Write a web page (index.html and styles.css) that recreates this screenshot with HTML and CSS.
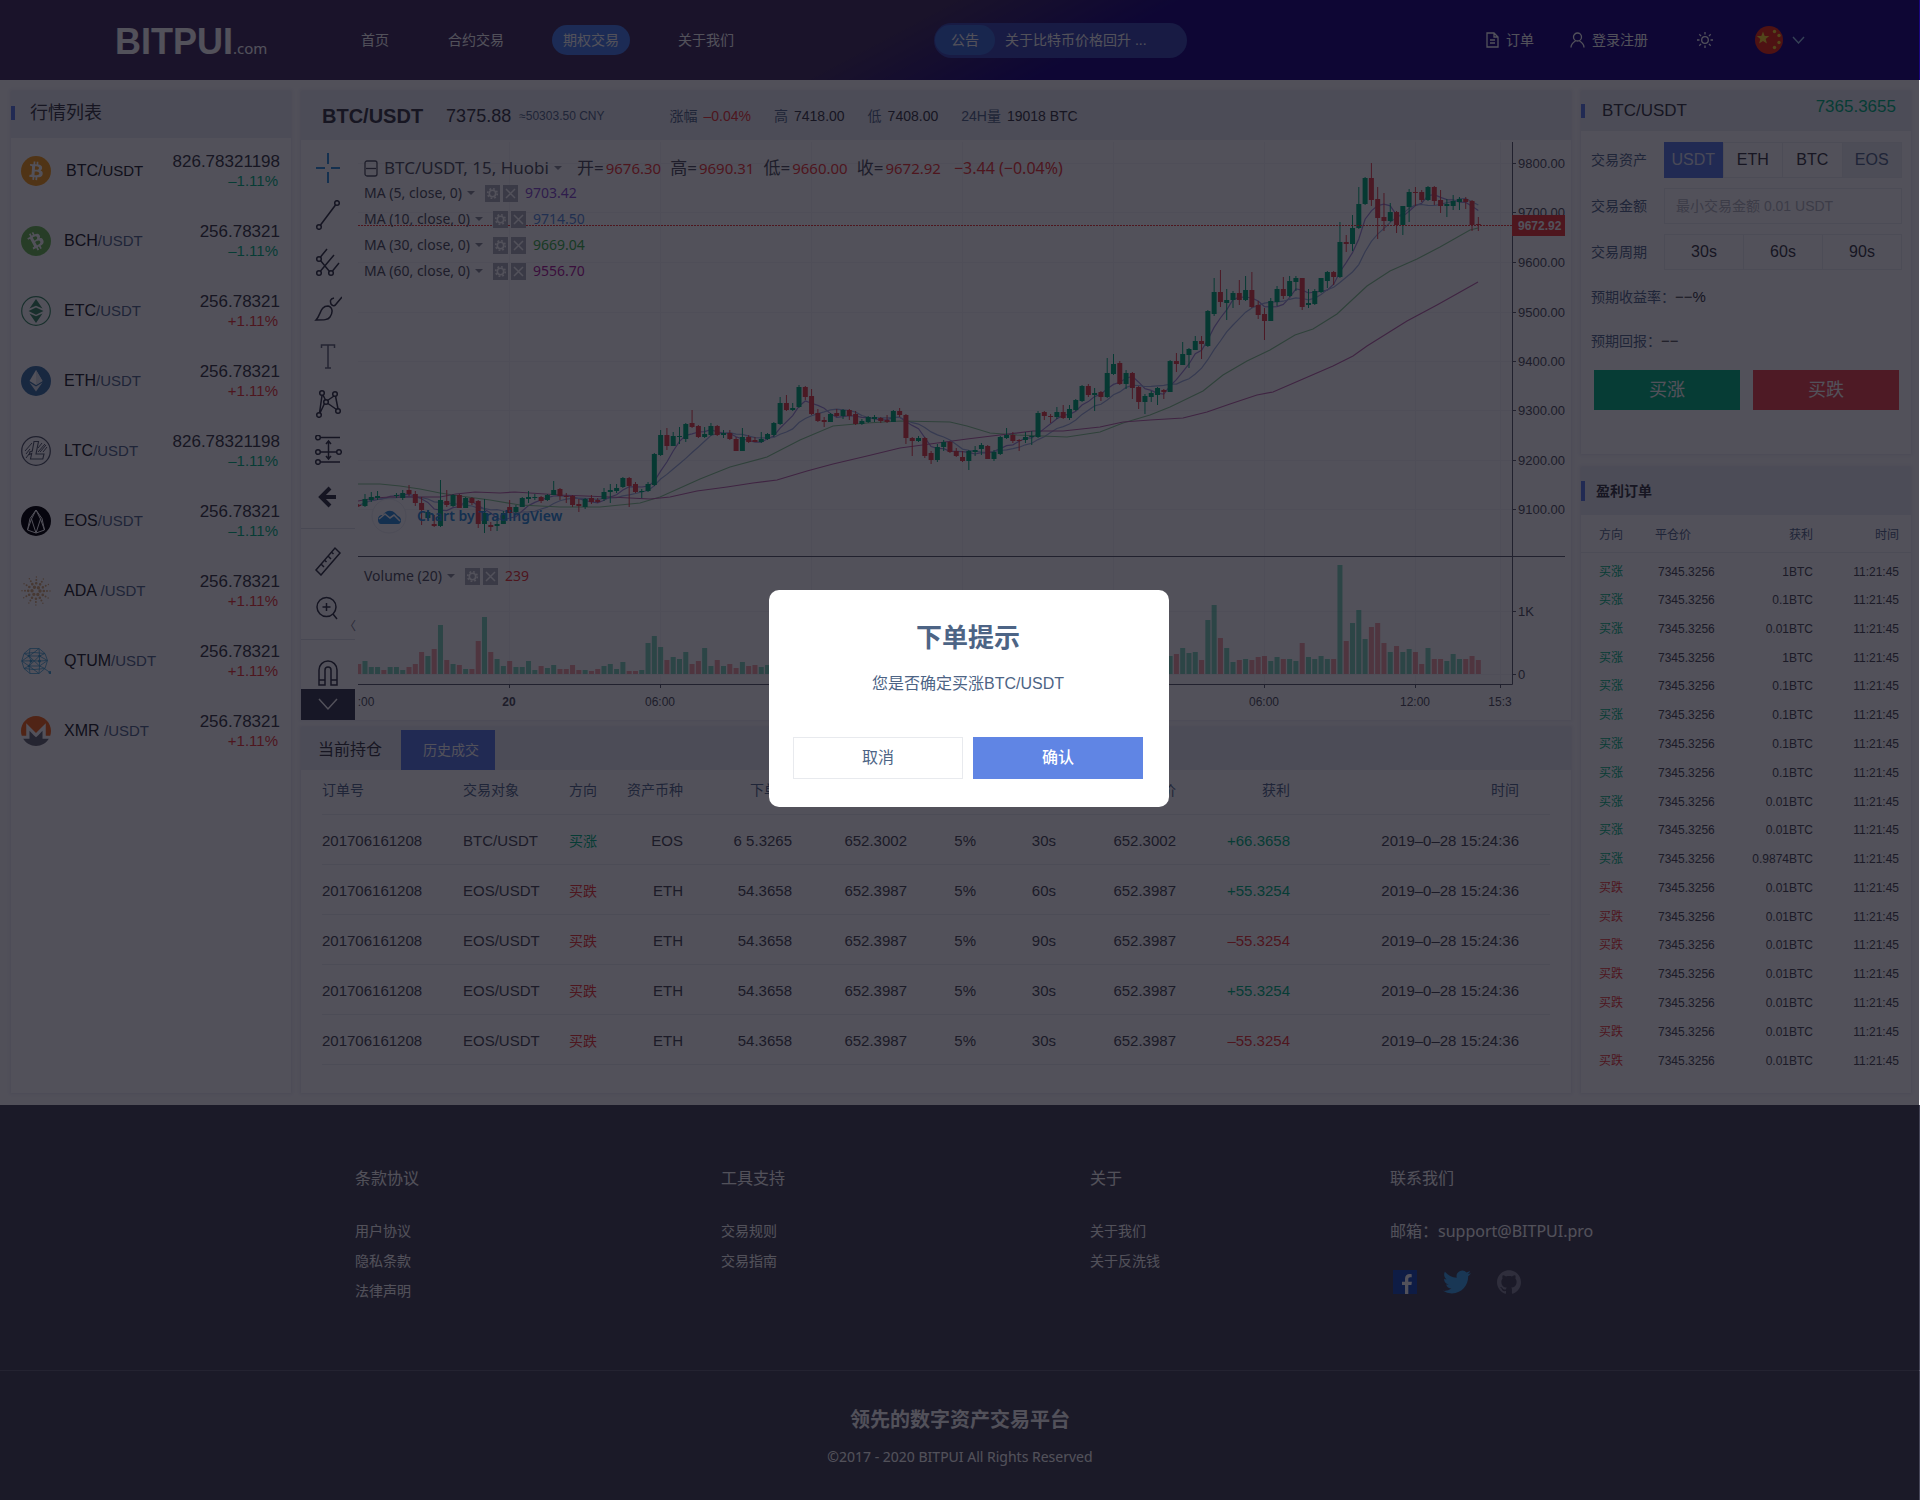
FILE: index.html
```html
<!DOCTYPE html>
<html lang="zh-CN">
<head>
<meta charset="utf-8">
<title>BITPUI 期权交易</title>
<meta name="viewport" content="width=device-width, initial-scale=1">
<link rel="stylesheet" href="styles.css">
</head>
<body>
<svg class="defs" aria-hidden="true">
  <symbol id="gear" viewBox="0 0 15 17"><rect width="15" height="17" fill="#b0b3bd"/><circle cx="7.5" cy="8.5" r="3.2" fill="none" stroke="#fff" stroke-width="1.6"/><circle cx="7.5" cy="8.5" r="4.8" fill="none" stroke="#fff" stroke-width="1.6" stroke-dasharray="1.8 1.97"/></symbol>
  <symbol id="cross" viewBox="0 0 15 17"><rect width="15" height="17" fill="#b0b3bd"/><path d="M3 4l9 9M12 4l-9 9" stroke="#fff" stroke-width="1.5"/></symbol>
  <symbol id="coin-b" viewBox="0 0 24 24"><path fill="#fff" fill-rule="evenodd" d="M17.288 10.291c.24-1.59-.974-2.45-2.64-3.03l.54-2.153-1.315-.33-.525 2.107c-.345-.087-.705-.167-1.064-.25l.526-2.127-1.32-.33-.54 2.165c-.285-.067-.565-.132-.84-.2l-1.815-.45-.35 1.407s.975.225.955.236c.535.136.63.486.615.766l-1.477 5.92c-.075.166-.24.406-.614.314.015.02-.96-.24-.96-.24l-.66 1.51 1.71.426.93.242-.54 2.19 1.32.327.54-2.17c.36.1.705.19 1.05.273l-.51 2.154 1.32.33.545-2.19c2.24.427 3.93.257 4.64-1.774.57-1.637-.03-2.58-1.217-3.196.854-.193 1.5-.76 1.68-1.93zm-3.01 4.22c-.404 1.64-3.157.75-4.05.53l.72-2.9c.896.23 3.757.67 3.33 2.37zm.41-4.24c-.37 1.49-2.662.735-3.405.55l.654-2.64c.744.18 3.137.524 2.75 2.09z"/></symbol>
</svg>

<header class="topbar">
  <a class="logo" href="#">BITPUI<span>.com</span></a>
  <nav class="nav">
    <a href="#">首页</a><a href="#">合约交易</a><a class="on" href="#">期权交易</a><a href="#">关于我们</a>
  </nav>
  <a class="notice" href="#"><b>公告</b><span>关于比特币价格回升 ...</span></a>
  <div class="session">
    <a href="#"><svg width="13" height="16" viewBox="0 0 13 16" fill="none" stroke="currentColor" stroke-width="1.3"><path d="M1 1h7l4 4v10H1zM8 1v4h4M4 8h5M4 11h5"/></svg>订单</a>
    <a href="#"><svg width="15" height="16" viewBox="0 0 15 16" fill="none" stroke="currentColor" stroke-width="1.3"><circle cx="7.5" cy="5" r="4"/><path d="M1 15.500c0-3.500 2-5 4.500-6.500M14 15.500c0-3.500-2-5-4.500-6.500"/></svg>登录注册</a>
  </div>
  <div class="prefs">
    <button aria-label="主题"><svg width="16" height="16" viewBox="0 0 16 16" fill="none" stroke="#fff" stroke-width="1.300"><circle cx="8" cy="8" r="3.300"/><path d="M8 0v2.500M8 13.500V16M0 8h2.500M13.500 8H16M2.300 2.300l1.800 1.800M11.900 11.900l1.800 1.800M2.300 13.700l1.800-1.800M11.900 4.100l1.800-1.800"/></svg></button>
    <button class="lang" aria-label="语言"><svg width="28" height="28" viewBox="0 0 28 28"><circle cx="14" cy="14" r="14" fill="#f02d12"/><g fill="#ffda2c"><path d="M8 5.500l1.700 4.400 4.500.200-3.500 2.900 1.200 4.500L8 15l-3.900 2.500 1.200-4.500L1.800 10.100l4.500-.200z"/><circle cx="19.500" cy="5.500" r="1.700"/><circle cx="24" cy="9.500" r="1.700"/><circle cx="24" cy="16.500" r="1.700"/><circle cx="19.500" cy="21.500" r="1.700"/></g></svg><svg width="13" height="8" viewBox="0 0 13 8" fill="none" stroke="#9fc8f0" stroke-width="1.400"><path d="M1 1l5.500 6L12 1"/></svg></button>
  </div>
</header>

<main class="board">
  <section class="panel markets">
    <h2 class="head mark">行情列表</h2>
    <ul>
      <li><svg viewBox="0 0 30 30"><circle cx="15" cy="15" r="15" fill="#f99f1b"/><use href="#coin-b" x="0" y="0" width="30" height="30" transform="rotate(-10 15 15)"/></svg><span class="pair main">BTC/<i>USDT</i></span><span class="quote">826.78321198<em class="up">–1.11%</em></span></li>
      <li><svg viewBox="0 0 30 30"><circle cx="15" cy="15" r="15" fill="#6ebd55"/><use href="#coin-b" x="0" y="0" width="30" height="30" transform="rotate(-42 15 15)"/></svg><span class="pair">BCH<i>/USDT</i></span><span class="quote">256.78321<em class="up">–1.11%</em></span></li>
      <li><svg viewBox="0 0 30 30"><circle cx="15" cy="15" r="14.300" fill="none" stroke="#3f8e66" stroke-width="1.200"/><g fill="#3f8e66"><path d="M15 3l6.500 9.500L15 9.700l-6.500 2.800zM15 11.500l7.500 3.500-7.500 3.700L7.500 15zM15 27l-6.500-9.500 6.500 2.800 6.500-2.800z"/></g></svg><span class="pair">ETC<i>/USDT</i></span><span class="quote">256.78321<em class="down">+1.11%</em></span></li>
      <li><svg viewBox="0 0 30 30"><circle cx="15" cy="15" r="15" fill="#3f76a8"/><path fill="#fff" d="M15 4l6.500 11L15 19l-6.500-4z"/><path fill="#dfe6ef" d="M15 4v15l6.500-4zM8.500 16.500L15 25.500l6.500-9L15 20.500z"/></svg><span class="pair">ETH<i>/USDT</i></span><span class="quote">256.78321<em class="down">+1.11%</em></span></li>
      <li><svg viewBox="0 0 30 30" fill="none" stroke="#555c6b"><circle cx="15" cy="15" r="14.300" stroke-width="1.300"/><path stroke-width="1.100" d="M13 5.500h4.500L15 18h8l-1.200 5H9.500l1.200-5.500-2.500 1 .6-2.500 2.500-1z"/><path d="M4 15l7-8M5 18l4-5M5 22l3-4M17 16l7-8M19 16l6-7M17 12l4-5M22 16l4-5" stroke-width="1"/></svg><span class="pair">LTC<i>/USDT</i></span><span class="quote">826.78321198<em class="up">–1.11%</em></span></li>
      <li><svg viewBox="0 0 30 30"><circle cx="15" cy="15" r="15" fill="#000"/><path fill="none" stroke="#fff" stroke-width="1" stroke-linejoin="round" d="M15 4l-6 8.500L6.500 24 15 27l8.500-3L21 12.500zM15 4l-4.500 9L15 27l4.500-14zM6.500 24l4-11M23.500 24l-4-11"/></svg><span class="pair">EOS<i>/USDT</i></span><span class="quote">256.78321<em class="up">–1.11%</em></span></li>
      <li><svg viewBox="0 0 30 30" fill="none" stroke="#d9ad7c" stroke-linecap="round"><circle cx="15" cy="15" r="4" stroke-width="3.400" stroke-dasharray="0 4.188"/><circle cx="15" cy="15" r="7.800" stroke-width="2.600" stroke-dasharray="0 4.084"/><circle cx="15" cy="15" r="11" stroke-width="2" stroke-dasharray="0 5.759"/><circle cx="15" cy="15" r="14" stroke-width="1.500" stroke-dasharray="0 7.330"/></svg><span class="pair">ADA <i>/USDT</i></span><span class="quote">256.78321<em class="down">+1.11%</em></span></li>
      <li><svg viewBox="0 0 30 30" fill="none" stroke="#45a5d4" stroke-width=".8"><path d="M9 2.500h9l6 5 2.500 7-2.500 8-6 5H9l-6-5L.8 15 3 7.500zM3 7.500l10-1 11 1M.8 15L8 10l10.500 0 8 4.500M.8 15l9-.200 8.700.200 8-.5M.8 15L8 20l10.500 0 8-5.500M3 22.500l10 1 11-1M9 2.500L8 10l5-3.500L18 2.500l.5 7.500 5.500-2.500M8 10l2 5-2 5 1 7.500M18.500 10v10l-.5 7.500M3 7.500L8 10M3 22.500L8 20l10 7.500M8 10l10.500 10 5.500 2.500M18.500 10L8 20M24 23l5 3.500"/><g fill="#45a5d4" stroke="none"><circle cx="10" cy="15" r="1.500"/><circle cx="18.500" cy="15" r="1.500"/><circle cx="18.500" cy="10" r="1.300"/><circle cx="8" cy="20" r="1.300"/><circle cx="8" cy="10" r="1.300"/><circle cx="29" cy="26.500" r="1.500"/></g></svg><span class="pair">QTUM<i>/USDT</i></span><span class="quote">256.78321<em class="down">+1.11%</em></span></li>
      <li><svg viewBox="0 0 24 24"><path fill="#f8691c" d="M12 0C5.365 0 0 5.373 0 12.015c0 1.335.228 2.607.618 3.810h3.577V5.729L12 13.545l7.805-7.815v10.095h3.577c.389-1.203.618-2.475.618-3.810C24 5.375 18.635 0 12 0z"/><path fill="#6a6b76" d="M10.212 15.307l-3.417-3.421v6.351H1.758C3.870 21.689 7.678 24 12 24s8.162-2.311 10.245-5.764h-5.040v-6.351l-3.386 3.421-1.788 1.790z"/></svg><span class="pair">XMR <i>/USDT</i></span><span class="quote">256.78321<em class="down">+1.11%</em></span></li>
    </ul>
  </section>

  <div class="column">
    <section class="panel">
      <div class="head ticker">
        <h1>BTC/USDT</h1><strong>7375.88</strong><small>≈50303.50 CNY</small>
        <dl>
          <div><dt>涨幅</dt><dd class="down">–0.04%</dd></div>
          <div><dt>高</dt><dd>7418.00</dd></div>
          <div><dt>低</dt><dd>7408.00</dd></div>
          <div><dt>24H量</dt><dd>19018 BTC</dd></div>
        </dl>
      </div>
      <div class="workspace">
        <div class="tools">
          <button aria-label="十字光标"><svg class="blue" viewBox="0 0 28 30"><path d="M14 0v11M14 19v11M2 15h9M17 15h9"/></svg></button>
          <button aria-label="趋势线"><svg viewBox="0 0 28 30"><circle cx="5" cy="27" r="2.300"/><circle cx="23" cy="3" r="2.300"/><path d="M6.500 25L21.500 5"/></svg></button>
          <button aria-label="音叉线"><svg viewBox="0 0 28 30"><circle cx="5" cy="12" r="2.300"/><circle cx="5" cy="26" r="2.300"/><circle cx="17" cy="26" r="2.300"/><path d="M6.500 10L13 2M6.500 24L20 8M18.500 24L25 16M6.500 13.500l9 11"/></svg></button>
          <button aria-label="画笔"><svg viewBox="0 0 28 30"><path d="M2 26c5-5 4-14 12-14 5 1 5 7 2 11-2 3-6 3-14 3zM20 4c-4 1-4 3-3 6 2 3 4 2 6-1l5-6"/></svg></button>
          <button aria-label="文字"><svg class="soft" viewBox="0 0 28 30"><path d="M7.500 7V4h13v3M14 4v23M11 27h6"/></svg></button>
          <button aria-label="形态"><svg viewBox="0 0 28 30"><circle cx="5" cy="27" r="2.300"/><circle cx="8" cy="5" r="2.300"/><circle cx="12" cy="14" r="2.300"/><circle cx="21" cy="6" r="2.300"/><circle cx="24" cy="23" r="2.300"/><path d="M5.500 25L8 7.500M9 7l2.500 5M13.500 12.500L20 8M21.500 8L24 21M14 15.500l8.500 6M10.500 15.500L6 25"/></svg></button>
          <button aria-label="测量"><svg viewBox="0 0 28 30"><circle cx="4" cy="2.500" r="2.300"/><circle cx="4" cy="17" r="2.300"/><circle cx="25" cy="17" r="2.300"/><circle cx="4" cy="27" r="2.300"/><path d="M6.500 2.500H26M6.500 17h16M6.500 27H26M14.500 7v16M12 9l2.500-3L17 9M12 21l2.500 3 2.500-3"/></svg></button>
          <button aria-label="后退"><svg class="fat" viewBox="0 0 28 30"><path d="M22 15H8M16 6l-9 9 9 9"/></svg></button>
          <hr>
          <button aria-label="标尺"><svg viewBox="0 0 28 30"><path d="M2 24L21 2l5 5L7 29zM7 18l3 3M10.500 14l2 2M14 10l3 3M17.500 6l2 2"/></svg></button>
          <button aria-label="放大"><svg viewBox="0 0 28 30"><circle cx="12.500" cy="14" r="9.500"/><path d="M19 21l4 5M8.500 14h8M12.500 10v8"/></svg></button>
          <hr>
          <button aria-label="磁铁"><svg viewBox="0 0 28 30"><path d="M5 28V13a9 9 0 0 1 18 0v15h-6V13a3 3 0 0 0-6 0v15zM5 23h6M17 23h6"/></svg></button>
          <button class="more" aria-label="更多工具"><svg width="20" height="14" viewBox="0 0 20 14" fill="none" stroke="#d5d7df" stroke-width="1.400"><path d="M1 1l9 10 9-10"/></svg></button>
          <button class="fold" aria-label="收起">〈</button>
        </div>
        <div class="chart">
          <svg id="chart" viewBox="358 140 1207 580" role="img" aria-label="BTC/USDT K线图">
            <g id="grid" stroke="#f3f4f7"></g>
            <g id="volume" opacity=".5"></g>
            <g id="averages" fill="none" stroke-width="1.200" opacity=".8"></g>
            <g id="candles"></g>
            <path d="M358 225.500H1512" stroke="#f03a38" stroke-dasharray="2 1"/>
            <circle cx="389" cy="516" r="17" fill="#fff" stroke="#eceef3"/>
            <path fill="#2f8fdb" d="M378 520c0-4 2-5 5-5 2-4 8-6 12-2l3 3c4 1 4 8 0 8h-17c-2 0-3-2-3-4z"/>
            <path fill="none" stroke="#fff" stroke-width="1.600" d="M379 519l6-5 5 4 4-3 6 6"/>
            <text x="417" y="521" class="wm">Chart by TradingView</text>
            <path d="M358 556.500H1565M358 684.500H1512.500M1512.500 142V684.500" fill="none" stroke="#5a5f6c"/>
            <g id="axis" class="axis"></g>
            <rect x="1512" y="215" width="53" height="21" fill="#f03a38"/>
            <text x="1518" y="230" class="tag">9672.92</text>
          </svg>
          <div class="legend">
            <p class="series"><svg width="14" height="17" viewBox="0 0 14 17" fill="none" stroke="#50535e" stroke-width="1.300"><rect x="1" y="1" width="12" height="15" rx="2"/><path d="M2 8.500h10"/></svg><b>BTC/USDT, 15, Huobi</b><u></u><span>开=<em class="down">9676.30</em></span><span>高=<em class="down">9690.31</em></span><span>低=<em class="down">9660.00</em></span><span>收=<em class="down">9672.92</em></span><strong class="down">−3.44 (−0.04%)</strong></p>
            <p>MA (5, close, 0)<u></u><svg><use href="#gear"/></svg><svg><use href="#cross"/></svg><em class="ma5">9703.42</em></p>
            <p>MA (10, close, 0)<u></u><svg><use href="#gear"/></svg><svg><use href="#cross"/></svg><em class="ma10">9714.50</em></p>
            <p>MA (30, close, 0)<u></u><svg><use href="#gear"/></svg><svg><use href="#cross"/></svg><em class="ma30">9669.04</em></p>
            <p>MA (60, close, 0)<u></u><svg><use href="#gear"/></svg><svg><use href="#cross"/></svg><em class="ma60">9556.70</em></p>
          </div>
          <div class="legend low"><p>Volume (20)<u></u><svg><use href="#gear"/></svg><svg><use href="#cross"/></svg><em class="down">239</em></p></div>
        </div>
      </div>
    </section>

    <section class="panel orders">
      <div class="head tabs"><button>当前持仓</button><button class="on">历史成交</button></div>
      <table>
        <colgroup><col class="w141"><col class="w106"><col class="w46"><col class="w68"><col class="w109"><col class="w115"><col class="w69"><col class="w80"><col class="w120"><col class="w114"><col class="w260"></colgroup>
        <thead><tr><th>订单号</th><th>交易对象</th><th>方向</th><th>资产币种</th><th>下单价</th><th>成交价</th><th>费率</th><th>周期</th><th>平仓价</th><th>获利</th><th>时间</th></tr></thead>
        <tbody>
          <tr><td>201706161208</td><td>BTC/USDT</td><td class="up">买涨</td><td>EOS</td><td>6 5.3265</td><td>652.3002</td><td>5%</td><td>30s</td><td>652.3002</td><td class="up">+66.3658</td><td>2019–0–28 15:24:36</td></tr>
          <tr><td>201706161208</td><td>EOS/USDT</td><td class="down">买跌</td><td>ETH</td><td>54.3658</td><td>652.3987</td><td>5%</td><td>60s</td><td>652.3987</td><td class="up">+55.3254</td><td>2019–0–28 15:24:36</td></tr>
          <tr><td>201706161208</td><td>EOS/USDT</td><td class="down">买跌</td><td>ETH</td><td>54.3658</td><td>652.3987</td><td>5%</td><td>90s</td><td>652.3987</td><td class="down">–55.3254</td><td>2019–0–28 15:24:36</td></tr>
          <tr><td>201706161208</td><td>EOS/USDT</td><td class="down">买跌</td><td>ETH</td><td>54.3658</td><td>652.3987</td><td>5%</td><td>30s</td><td>652.3987</td><td class="up">+55.3254</td><td>2019–0–28 15:24:36</td></tr>
          <tr><td>201706161208</td><td>EOS/USDT</td><td class="down">买跌</td><td>ETH</td><td>54.3658</td><td>652.3987</td><td>5%</td><td>30s</td><td>652.3987</td><td class="down">–55.3254</td><td>2019–0–28 15:24:36</td></tr>
        </tbody>
      </table>
    </section>
  </div>

  <div class="column side">
    <section class="panel">
      <div class="head mark quotehead"><h2>BTC/USDT</h2><span class="up">7365.3655</span></div>
      <form class="trade">
        <div class="field"><span>交易资产</span><div class="seg"><button type="button" class="on">USDT</button><button type="button">ETH</button><button type="button">BTC</button><button type="button" class="off">EOS</button></div></div>
        <div class="field"><label for="amount">交易金额</label><input id="amount" type="text" placeholder="最小交易金额 0.01 USDT"></div>
        <div class="field"><span>交易周期</span><div class="seg"><button type="button">30s</button><button type="button">60s</button><button type="button">90s</button></div></div>
        <p>预期收益率：<b>−−%</b></p>
        <p>预期回报：<b>−−</b></p>
        <div class="sides"><button type="button" class="buy">买涨</button><button type="button" class="sell">买跌</button></div>
      </form>
    </section>
    <section class="panel profits">
      <h2 class="head mark">盈利订单</h2>
      <table>
        <thead><tr><th>方向</th><th>平仓价</th><th>获利</th><th>时间</th></tr></thead>
        <tbody>
          <tr><td class="up">买涨</td><td>7345.3256</td><td>1BTC</td><td>11:21:45</td></tr>
          <tr><td class="up">买涨</td><td>7345.3256</td><td>0.1BTC</td><td>11:21:45</td></tr>
          <tr><td class="up">买涨</td><td>7345.3256</td><td>0.01BTC</td><td>11:21:45</td></tr>
          <tr><td class="up">买涨</td><td>7345.3256</td><td>1BTC</td><td>11:21:45</td></tr>
          <tr><td class="up">买涨</td><td>7345.3256</td><td>0.1BTC</td><td>11:21:45</td></tr>
          <tr><td class="up">买涨</td><td>7345.3256</td><td>0.1BTC</td><td>11:21:45</td></tr>
          <tr><td class="up">买涨</td><td>7345.3256</td><td>0.1BTC</td><td>11:21:45</td></tr>
          <tr><td class="up">买涨</td><td>7345.3256</td><td>0.1BTC</td><td>11:21:45</td></tr>
          <tr><td class="up">买涨</td><td>7345.3256</td><td>0.01BTC</td><td>11:21:45</td></tr>
          <tr><td class="up">买涨</td><td>7345.3256</td><td>0.01BTC</td><td>11:21:45</td></tr>
          <tr><td class="up">买涨</td><td>7345.3256</td><td>0.9874BTC</td><td>11:21:45</td></tr>
          <tr><td class="down">买跌</td><td>7345.3256</td><td>0.01BTC</td><td>11:21:45</td></tr>
          <tr><td class="down">买跌</td><td>7345.3256</td><td>0.01BTC</td><td>11:21:45</td></tr>
          <tr><td class="down">买跌</td><td>7345.3256</td><td>0.01BTC</td><td>11:21:45</td></tr>
          <tr><td class="down">买跌</td><td>7345.3256</td><td>0.01BTC</td><td>11:21:45</td></tr>
          <tr><td class="down">买跌</td><td>7345.3256</td><td>0.01BTC</td><td>11:21:45</td></tr>
          <tr><td class="down">买跌</td><td>7345.3256</td><td>0.01BTC</td><td>11:21:45</td></tr>
          <tr><td class="down">买跌</td><td>7345.3256</td><td>0.01BTC</td><td>11:21:45</td></tr>
        </tbody>
      </table>
    </section>
  </div>
</main>

<footer class="footer">
  <div class="links">
    <div><h3>条款协议</h3><a href="#">用户协议</a><a href="#">隐私条款</a><a href="#">法律声明</a></div>
    <div><h3>工具支持</h3><a href="#">交易规则</a><a href="#">交易指南</a></div>
    <div><h3>关于</h3><a href="#">关于我们</a><a href="#">关于反洗钱</a></div>
    <div><h3>联系我们</h3><a class="mail" href="mailto:support@BITPUI.pro">邮箱：support@BITPUI.pro</a>
      <div class="social">
        <a href="#" aria-label="Facebook"><svg width="24" height="24" viewBox="0 0 24 24"><path fill="#1c4fb8" d="M0 0h24v24H0z"/><path fill="#fff" d="M12 24v-9H9v-3.200h3V9c0-3.200 1.900-4.900 4.700-4.900 1 0 1.500.1 2 .2v2.900h-1.400c-1.500 0-2 .8-2 1.900v2.700h3.600l-.5 3.200h-3.100v9z"/></svg></a>
        <a href="#" aria-label="Twitter"><svg width="28" height="28" viewBox="0 0 24 24" fill="#40a8ee"><path d="M23.953 4.570a10 10 0 01-2.825.775 4.958 4.958 0 002.163-2.723c-.951.555-2.005.959-3.127 1.184a4.920 4.920 0 00-8.384 4.482C7.690 8.095 4.067 6.130 1.640 3.162a4.822 4.822 0 00-.666 2.475c0 1.710.870 3.213 2.188 4.096a4.904 4.904 0 01-2.228-.616v.060a4.923 4.923 0 003.946 4.827 4.996 4.996 0 01-2.212.085 4.936 4.936 0 004.604 3.417 9.867 9.867 0 01-6.102 2.105c-.390 0-.779-.023-1.170-.067a13.995 13.995 0 007.557 2.209c9.053 0 13.998-7.496 13.998-13.985 0-.210 0-.420-.015-.630A9.935 9.935 0 0024 4.590z"/></svg></a>
        <a href="#" aria-label="GitHub"><svg width="24" height="24" viewBox="0 0 24 24" fill="#8a8b9a"><path d="M12 .297c-6.630 0-12 5.373-12 12 0 5.303 3.438 9.800 8.205 11.385.600.113.820-.258.820-.577 0-.285-.010-1.040-.015-2.040-3.338.724-4.042-1.610-4.042-1.610C4.422 18.070 3.633 17.700 3.633 17.700c-1.087-.744.084-.729.084-.729 1.205.084 1.838 1.236 1.838 1.236 1.070 1.835 2.809 1.305 3.495.998.108-.776.417-1.305.760-1.605-2.665-.300-5.466-1.332-5.466-5.930 0-1.310.465-2.380 1.235-3.220-.135-.303-.540-1.523.105-3.176 0 0 1.005-.322 3.300 1.230.960-.267 1.980-.399 3-.405 1.020.006 2.040.138 3 .405 2.280-1.552 3.285-1.230 3.285-1.230.645 1.653.240 2.873.120 3.176.765.840 1.230 1.910 1.230 3.220 0 4.610-2.805 5.625-5.475 5.920.420.360.810 1.096.810 2.220 0 1.606-.015 2.896-.015 3.286 0 .315.210.690.825.570C20.565 22.092 24 17.592 24 12.297c0-6.627-5.373-12-12-12"/></svg></a>
      </div>
    </div>
  </div>
  <div class="legal"><strong>领先的数字资产交易平台</strong><span>©2017 - 2020 BITPUI All Rights Reserved</span></div>
</footer>

<div class="mask">
  <div class="dialog" role="dialog" aria-labelledby="dialog-title">
    <h2 id="dialog-title">下单提示</h2>
    <p>您是否确定买涨BTC/USDT</p>
    <div class="actions"><button>取消</button><button class="ok">确认</button></div>
  </div>
</div>
<script src="chart.js"></script>
</body>
</html>
```
FILE: styles.css
```css
:root {
  --ink: #3a3b45;
  --label: #566b8c;
  --up: #03b983;
  --down: #f03a38;
  --blue: #5b7ce6;
  --line: #eceef2;
  --head: #ebeef3;
  --sans: "Liberation Sans", "Noto Sans CJK SC", sans-serif;
  --hum: "Noto Sans", "Noto Sans CJK SC", sans-serif;
}
* { box-sizing: border-box; margin: 0; padding: 0; }
body { background: #fafafc; color: var(--ink); font-family: var(--sans); font-size: 14px; line-height: 20px; }
a { color: inherit; text-decoration: none; }
button, input { font: inherit; color: inherit; background: none; border: 0; }
ul { list-style: none; }
i, em { font-style: normal; }
svg { display: block; flex: none; }
table { border-collapse: collapse; width: 100%; }
th { font-weight: 400; color: var(--label); }
.defs { position: absolute; width: 0; height: 0; }
.up { color: var(--up); }
.down { color: var(--down); }

/* top bar */
.topbar {
  display: flex; align-items: center; height: 80px; padding: 0 115px; color: #fff;
  background: linear-gradient(152deg, #44305f 0, #44305f 46%, #1b0680 57%, #1b0680 100%);
}
.logo { width: 235px; padding-top: 9px; font-size: 36px; font-weight: 700; line-height: 40px; }
.logo span { font-family: var(--hum); font-size: 15px; font-weight: 400; }
.nav { display: flex; gap: 37px; width: 584px; }
.nav a { padding: 0 11px; line-height: 30px; border-radius: 15px; }
.nav .on { background: #4a80ee; }
.notice { display: flex; align-items: center; gap: 10px; width: 253px; height: 35px; border-radius: 18px; background: #3c4cb4; }
.notice b { font-weight: 400; padding: 0 16px; margin-left: 1px; line-height: 30px; border-radius: 15px; background: #3f6fd8; }
.session { display: flex; gap: 36px; margin-left: auto; }
.session a { display: flex; align-items: center; gap: 7px; }
.prefs { display: flex; align-items: center; gap: 42px; margin-left: 49px; }
.lang { display: flex; align-items: center; gap: 9px; }

/* board */
.board { display: grid; grid-template-columns: 280px minmax(0, 1fr) 330px; gap: 10px; padding: 11px 9px 12px 11px; }
.column { display: flex; flex-direction: column; gap: 7px; }
.side { gap: 13px; }
.panel { background: #fff; box-shadow: 0 0 3px 1px #e6e8ee; }
.orders, .profits { flex: 1; }
.head { display: flex; align-items: center; background: var(--head); }
.mark::before { content: ""; width: 4px; height: 14px; background: var(--blue); }

.markets .head { height: 47px; padding-bottom: 3px; gap: 15px; font-size: 18px; font-weight: 400; }
.markets li { display: flex; align-items: center; height: 70px; padding: 0 11px 4px 10px; }
.markets li svg { width: 30px; height: 30px; margin-right: 13px; }
.pair { font-size: 16px; color: #24252c; }
.pair i { font-size: 15px; color: var(--label); }
.pair.main { padding-left: 2px; }
.pair.main i { color: inherit; }
.quote { margin-left: auto; display: flex; flex-direction: column; text-align: right; font-size: 17px; line-height: 20px; }
.quote em { font-size: 15px; line-height: 18px; padding-right: 2px; }

.ticker { height: 49px; padding-left: 21px; }
.ticker h1 { font-size: 20px; font-weight: 700; }
.ticker strong { font-size: 18px; font-weight: 400; margin: 0 8px 0 23px; }
.ticker small { font-size: 12px; color: var(--label); }
.ticker dl { display: flex; gap: 23px; margin-left: 65px; }
.ticker dl div { display: flex; gap: 6px; }
.ticker dt { color: var(--label); }

.workspace { display: grid; grid-template-columns: 54px minmax(0, 1fr); }
.tools { position: relative; display: flex; flex-direction: column; padding-top: 4px; }
.tools button { height: 47px; display: flex; align-items: center; justify-content: center; }
.tools button svg { width: 28px; height: 30px; fill: none; stroke: #333644; stroke-width: 1.5; }
.tools button .blue { stroke: #2f8fdb; stroke-width: 2; }
.tools button .soft { stroke: #666a78; }
.tools button .fat { stroke-width: 4; }
.tools hr { border: 0; border-top: 1px solid #dcdfe6; margin: 8px 0; }
.tools .more { position: absolute; left: 0; right: 0; bottom: 0; height: 31px; background: #3b3c52; }
.tools .more svg { width: 20px; height: 14px; stroke: #fff; }
.tools .fold { position: absolute; right: 0; top: 477px; height: 20px; width: 10px; font-size: 12px; color: #777b88; }

.chart { position: relative; padding: 0 6px 0 3px; }
.chart > svg { width: 100%; height: auto; }
.axis text { font: 13px var(--sans); fill: #50535e; stroke: none; }
.axis .time { font-size: 12px; }
.axis .day { font-weight: 700; }
.tag { font: 700 12px var(--sans); fill: #fff; }
.wm { font: 600 14px var(--hum); fill: #2f8fdb; }
.legend { position: absolute; left: 9px; top: 16px; font-family: var(--hum); color: #50535e; }
.legend p { display: flex; align-items: center; height: 26px; white-space: nowrap; }
.legend svg { width: 15px; height: 17px; margin-right: 3px; }
.legend u { border: 4px solid transparent; border-top-color: #8a8d98; border-bottom: 0; margin: 0 10px 0 5px; }
.legend em { margin-left: 4px; }
.legend .series { height: 24px; gap: 9px; font-size: 17px; }
.legend .series svg { width: 14px; margin: 0; }
.legend .series b { font-weight: 400; margin-left: -3px; }
.legend .series u { margin: 0 6px 0 -4px; }
.legend .series em { margin-left: 2px; font-size: 15px; }
.legend .series strong { margin-left: 4px; font-weight: 400; font-size: 16px; }
.low { top: 423px; }
.ma5 { color: #8b52d0; }
.ma10 { color: #5b8fe0; }
.ma30 { color: #3db24c; }
.ma60 { color: #b0249a; }

.tabs { height: 43px; padding: 3px 0 0 17px; align-items: stretch; gap: 19px; }
.tabs button { font-size: 16px; }
.tabs .on { width: 94px; padding-left: 6px; font-size: 14px; color: #fff; background: var(--blue); }
.orders { padding-bottom: 28px; }
.orders table { table-layout: fixed; width: auto; margin: 0 21px; font-size: 15px; color: #4a4b56; }
.orders th { height: 44px; font-size: 14px; padding-bottom: 4px; }
.orders td { height: 50px; padding-top: 4px; }
.orders tr { border-bottom: 1px solid var(--line); }
.orders th, .orders td { text-align: right; white-space: nowrap; }
.orders :is(th, td):nth-child(-n+3) { text-align: left; }
.orders :is(th, td):last-child { padding-right: 31px; }
.orders td:nth-child(3) { font-size: 14px; }
.w141 { width: 141px; } .w106 { width: 106px; } .w46 { width: 46px; } .w68 { width: 68px; }
.w109 { width: 109px; } .w115 { width: 115px; } .w69 { width: 69px; } .w80 { width: 80px; }
.w120 { width: 120px; } .w114 { width: 114px; } .w260 { width: 260px; }

/* order form */
.quotehead { height: 40px; padding-right: 15px; font-size: 17px; border-bottom: 1px solid var(--line); }
.quotehead h2 { font-size: 17px; font-weight: 400; margin: 0 auto 0 17px; }
.quotehead span { padding-bottom: 7px; }
.trade { padding: 11px 9px 44px 10px; }
.field { display: grid; grid-template-columns: 73px 1fr; align-items: center; margin-bottom: 10px; color: var(--label); }
.field input, .seg { height: 36px; border: 1px solid var(--line); }
.field input { width: 100%; padding: 0 11px; }
.field input::placeholder { color: #b4b7c0; }
.seg { display: flex; font-size: 16px; color: var(--ink); }
.seg button { flex: 1; border-left: 1px solid var(--line); }
.seg button:first-child { border-left: 0; }
.seg .on { margin: -1px 0 -1px -1px; background: var(--blue); color: #dfe4f5; }
.seg .off { background: #edf0f5; color: var(--label); }
.trade p { margin-top: 15px; line-height: 24px; color: var(--label); }
.trade p + p { margin-top: 20px; }
.trade p b { font-weight: 400; font-size: 15px; color: var(--ink); }
.sides { display: flex; gap: 13px; margin: 17px 3px 0; }
.sides button { flex: 1; height: 40px; font-size: 18px; color: #fff; }
.buy { background: #03b983; }
.sell { background: #f2484e; }

.profits { padding-bottom: 23px; }
.profits .head { height: 48px; gap: 11px; font-size: 14px; font-weight: 700; }
.profits .mark::before { height: 20px; }
.profits table { table-layout: fixed; height: 555px; font-size: 12px; line-height: 16px; color: #4a4b56; }
.profits th { height: 37px; padding-top: 3px; }
.profits td { height: 28px; padding-top: 10px; }
.profits thead tr { border-bottom: 1px solid var(--line); }
.profits :is(th, td) { text-align: left; }
.profits :is(th, td):nth-child(1) { width: 74px; padding-left: 18px; }
.profits td:nth-child(2) { padding-left: 3px; }
.profits :is(th, td):nth-child(n+3) { text-align: right; }
.profits :is(th, td):nth-child(3) { width: 95px; }
.profits :is(th, td):nth-child(4) { width: 98px; padding-right: 12px; }

/* footer */
.footer { background: #474759; color: #fff; }
.links { display: grid; grid-template-columns: 366px 369px 300px 1fr; height: 266px; padding: 62px 0 0 355px; border-bottom: 1px solid #656477; }
.links h3 { font-size: 16px; font-weight: 400; line-height: 24px; margin-bottom: 25px; }
.links a { display: block; width: max-content; line-height: 30px; }
.links .mail { font: 16px/30px var(--hum); }
.social { display: flex; align-items: center; gap: 26px; margin-top: 22px; padding-left: 3px; }
.legal { display: flex; flex-direction: column; align-items: center; gap: 12px; padding: 35px 0 32px; font: 14px/22px var(--hum); }
.legal strong { font-size: 20px; line-height: 28px; }

/* confirm dialog */
.mask { position: fixed; inset: 0 1px 0 0; display: flex; justify-content: center; align-items: flex-start; padding: 590px 0 0 19px; background: rgba(8, 7, 20, .7); }
.dialog { width: 400px; padding: 28px 26px 28px 24px; border-radius: 10px; background: #fff; text-align: center; color: #4d6485; }
.dialog h2 { font-size: 26px; line-height: 40px; }
.dialog p { margin: 14px 0 41px; font-size: 16px; line-height: 24px; }
.actions { display: flex; gap: 10px; }
.actions button { flex: 1; height: 42px; font-size: 16px; border: 1px solid #e8eaee; }
.actions .ok { background: #6085e4; border-color: #6085e4; color: #fff; font-weight: 500; }
```
FILE: chart.js
```js
// One candle per entry: colour, body top, body bottom, wick high, wick low, volume height.
// Upper-case colours have a volume bar only.
const rows = `r505 506 504 507 10|g499 506 494 507 13|g497 500 492 502 7|g496 498 491 500 7|R495 495 495 495 4|G495 495 495 495 7|g495 496 493 498 7|g493 498 490 500 4|r490 494 485 496 7
r494 503 491 506 10|r503 510 497 525 22|g512 518 510 519 18|r524 526 515 527 25|g500 526 480 527 49|r501 505 490 507 14|g495 506 494 507 10|r495 508 494 508 9|g498 508 497 508 5|r498 503 497 505 5
r501 524 500 528 33|g513 524 499 533 57|r525 527 522 531 22|g524 526 519 531 15|g513 524 511 524 8|r507 513 500 517 13|g507 512 505 514 7|g498 507 497 507 7|g497 499 491 503 13|g497 498 494 500 4
r497 501 496 503 8|g495 500 494 501 6|g490 495 481 495 9|r489 496 488 500 5|r496 497 493 503 5|r496 505 495 507 9|r504 506 499 512 4|g499 507 498 509 4|r498 502 495 504 3|r500 502 498 503 5
g492 499 488 501 8|g490 492 484 503 10|g488 491 484 493 5|g478 487 477 488 12|r478 486 477 507 3|r484 492 482 493 3|g491 492 489 498 4|g484 491 482 492 31|g454 485 453 486 38|g435 455 430 456 27
r435 446 428 450 14|g436 446 432 446 17|g436 437 427 444 15|g424 439 423 442 22|r423 427 410 428 10|r426 437 425 438 13|g434 437 427 438 26|g426 435 423 436 8|r426 435 425 436 14|g433 435 430 438 8
r433 439 430 440 10|r439 451 437 451 6|g437 451 428 451 12|r437 442 435 443 8|r440 442 437 442 9|g439 442 432 443 7|g434 439 433 440 9|g423 435 422 437 11|g403 424 397 425 25|r403 410 395 411 18
g408 410 403 411 12|g387 407 385 408 28|r387 397 386 400 18|r396 414 389 415 22|r413 421 409 422 14|r420 422 417 427 11|g414 422 413 422 10|r413 416 409 417 12|g410 416 409 419 8|r410 416 409 420 10
r414 424 411 425 14|g421 424 419 425 8|g417 422 416 423 9|g417 419 415 422 7|r418 421 417 423 8|r420 422 415 423 9|g411 422 410 422 14|r411 415 408 417 12|r415 438 414 444 30|r438 441 437 456 22
g438 441 436 442 14|r438 456 437 458 20|r453 460 451 464 16|g447 460 444 462 18|g442 447 440 451 12|r442 452 441 453 14|r451 456 448 457 10|r457 461 451 462 12|g451 461 450 470 18|g450 452 446 456 9
g445 449 443 455 8|r446 459 445 459 14|g452 459 450 461 12|g437 454 436 455 20|g435 438 428 439 16|r435 441 432 443 12|r440 441 439 451 10|g437 440 432 443 9|g436 437 431 445 10|g413 437 411 438 28
r412 416 411 420 14|r416 417 414 423 10|g412 417 407 419 12|r412 418 405 419 12|g409 418 405 420 14|g400 410 399 411 18|g386 401 385 402 24|r386 395 384 397 16|g393 395 388 411 18|r392 397 391 401 12
g373 397 358 398 36|g364 374 354 375 34|r363 384 361 385 28|g373 384 370 389 20|r373 388 372 399 22|r387 402 386 409 20|g396 402 394 414 18|g393 397 391 402 16|g388 395 387 405 14|r390 392 389 399 14
g361 392 360 392 18|r361 364 353 372 20|g354 365 342 365 26|g349 355 348 368 21|g341 350 336 350 22|r341 344 336 359 14|g311 346 310 347 54|g292 314 278 316 69|r292 302 270 307 36|g300 303 289 320 26
g293 300 291 308 12|r293 300 280 305 14|g290 300 276 301 15|r290 307 272 308 14|r305 315 301 319 17|r314 321 308 340 18|g301 321 298 321 13|g289 302 286 306 17|r289 296 277 299 15|g281 296 276 297 15
g278 282 276 291 13|r278 307 278 310 31|g303 305 289 308 17|g291 304 289 305 15|g278 292 278 293 18|g272 281 271 288 15|r272 277 271 285 15|g242 277 222 278 109|r242 244 235 252 33|g228 244 215 251 51
g204 228 187 229 64|g178 204 177 205 35|r178 200 163 206 47|r199 218 187 239 51|r217 221 193 231 31|g212 221 203 222 22|r212 225 211 233 28|g206 225 206 235 22|g192 207 189 222 25|r192 193 187 206 22
r192 200 190 202 10|g187 200 186 201 26|r187 201 186 205 15|r200 206 190 213 15|g204 206 199 217 13|g201 206 195 210 20|g199 202 197 210 15|r199 202 197 209 15|r201 225 200 231 18|r224 225 217 231 14`;

const step = 6.29;
const x0 = 358.7;
const candles = rows.split(/[|\n]/).map((row, i) => {
  const [top, bottom, high, low, volume] = row.slice(1).split(' ').map(Number);
  return { side: row[0], top, bottom, high, low, volume, x: x0 + i * step };
});

const ns = 'http://www.w3.org/2000/svg';
function add(parent, name, attrs, text) {
  const node = document.createElementNS(ns, name);
  for (const key in attrs) node.setAttribute(key, attrs[key]);
  if (text) node.textContent = text;
  document.getElementById(parent).appendChild(node);
}

const prices = [[163, '9800.00'], [212, '9700.00'], [262, '9600.00'], [312, '9500.00'], [361, '9400.00'], [410, '9300.00'], [460, '9200.00'], [509, '9100.00'], [611, '1K'], [674, '0']];
prices.forEach(([y, label]) => {
  add('grid', 'path', { d: `M358 ${y}.5H1512` });
  add('axis', 'path', { d: `M1512 ${y}.5h4`, stroke: '#5a5f6c' });
  add('axis', 'text', { x: 1518, y: y + 5 }, label);
});
const times = [[366, ':00'], [509, '20', 'day'], [660, '06:00'], [811, '12:00'], [962, '18:00'], [1113, '21'], [1264, '06:00'], [1415, '12:00'], [1500, '15:3']];
times.forEach(([x, label, extra], i) => {
  if (i) add('grid', 'path', { d: `M${x}.5 142V684` });
  if (i) add('axis', 'path', { d: `M${x}.5 684v4`, stroke: '#5a5f6c' });
  add('axis', 'text', { x, y: 706, 'text-anchor': 'middle', class: `time ${extra || ''}` }, label);
});

const fill = { g: '#02b07a', r: '#e8434c' };
candles.forEach((c) => {
  const color = fill[c.side.toLowerCase()];
  add('volume', 'rect', { x: c.x - 2.5, y: 674 - c.volume, width: 5, height: c.volume, fill: color });
  if (!fill[c.side]) return;
  add('candles', 'rect', { x: c.x - 0.5, y: c.high, width: 1, height: c.low - c.high, fill: color });
  add('candles', 'rect', { x: c.x - 2.5, y: c.top, width: 5, height: Math.max(1, c.bottom - c.top), fill: color });
});

// Short averages follow from the closes.
const closes = candles.map((c) => (c.side === 'g' ? c.top : c.bottom));
function average(n) {
  return candles.map((c, i) => {
    const part = closes.slice(Math.max(0, i - n + 1), i + 1);
    return `${c.x.toFixed(1)},${(part.reduce((a, b) => a + b, 0) / part.length).toFixed(1)}`;
  }).join(' ');
}
add('averages', 'polyline', { points: average(5), stroke: '#8b72d0' });
add('averages', 'polyline', { points: average(10), stroke: '#8aa0d8' });
add('averages', 'polyline', { stroke: '#6fbf7c', points: '358,484 380,484 400,486 420,489 440,493 460,496 490,500 520,505 560,507 600,507 640,503 660,497 680,488 700,479 730,467 767,457 800,440 833,426 867,423 900,421 950,422 967,426 990,433 1017,435 1067,437 1100,432 1123,423 1150,415 1170,407 1203,391 1223,375 1247,361 1270,350 1295,335 1313,329 1337,314 1367,286 1390,271 1417,259 1440,247 1470,230 1478,228' });
add('averages', 'polyline', { stroke: '#b0449a', points: '358,501 375,498 390,497 440,497 456,494 475,492 500,493 515,492 560,495 610,497 650,499 670,497 697,491 727,487 753,483 777,480 807,471 833,464 867,456 900,448 930,444 967,439 1000,435 1033,431 1063,431 1100,427 1123,422 1150,420 1183,418 1207,412 1230,404 1257,395 1273,392 1303,379 1333,366 1353,356 1367,346 1407,321 1437,305 1478,282' });
```
